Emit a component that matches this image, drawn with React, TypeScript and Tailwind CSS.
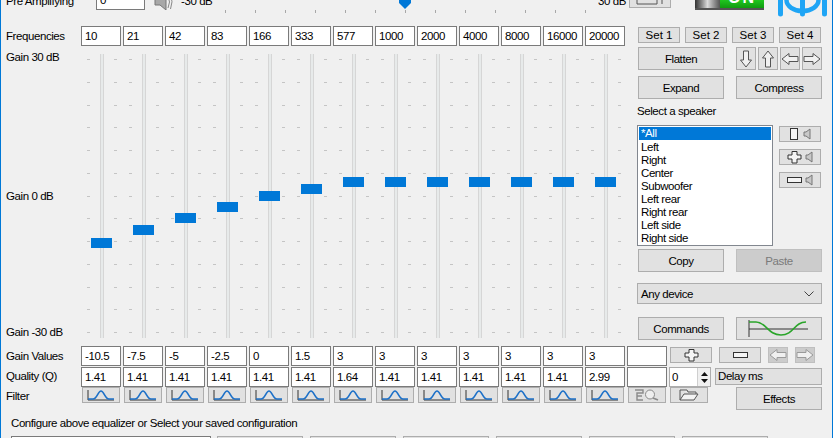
import React from "react";

const col = "border border-[#adadad] bg-[#e1e1e1] flex items-center justify-center shrink-0";
const txt = "border border-[#adadad] bg-[#e1e1e1] flex items-center justify-center shrink-0 pt-[2px]";
const freqs = ["10","21","42","83","166","333","577","1000","2000","4000","8000","16000","20000"];
const gains = ["-10.5","-7.5","-5","-2.5","0","1.5","3","3","3","3","3","3","3",""];
const qs = ["1.41","1.41","1.41","1.41","1.41","1.41","1.64","1.41","1.41","1.41","1.41","1.41","2.99",""];
const thumbs = [184,171,159,148,137,130,123,123,123,123,123,123,123];
const speakers = ["Left","Right","Center","Subwoofer","Left rear","Right rear","Left side","Right side"];
const ticks13 = Array.from({ length: 13 }, (_, i) => i);

function Field({ v }: { v: string }) {
  return <div className="w-[40px] h-[20px] shrink-0 bg-white border border-[#7a7a7a] pl-[3px] leading-[18px] overflow-hidden">{v}</div>;
}

function TickCol() {
  return (
    <div className="w-[3px] h-full py-[5px] flex flex-col justify-between">
      {ticks13.map((i) => <div key={i} className="h-px bg-[#c4c4c4]" />)}
    </div>
  );
}

function Slider({ top }: { top: number }) {
  return (
    <div className="relative w-[42px] h-[284px] shrink-0 flex">
      <div className="ml-[6px] h-full"><TickCol /></div>
      <div className="ml-[10px] w-[4px] h-full bg-[#e7eaea] border-x border-[#d6d6d6]" />
      <div className="ml-[10px] h-full"><TickCol /></div>
      <div className="absolute left-[10px] w-[21px] h-[10px] bg-[#0078d7]" style={{ top }} />
    </div>
  );
}

function Arrow({ dir, color = "#555555" }: { dir: "up" | "down" | "left" | "right"; color?: string }) {
  const rot = { up: 0, right: 90, down: 180, left: 270 }[dir];
  return (
    <svg width="18" height="18" viewBox="0 0 18 18" className="shrink-0">
      <g transform={`rotate(${rot} 9 9)`}>
        <path d="M9 1 L14.5 8 H11.5 V17 H6.5 V8 H3.5 Z" fill="#f0f0f0" stroke={color} strokeWidth="1" />
      </g>
    </svg>
  );
}

function Bell() {
  return (
    <svg width="28" height="13" viewBox="0 0 28 13">
      <path d="M1 1 V11 H27" fill="none" stroke="#333333" strokeWidth="1" />
      <path d="M1 10 H6 C10 10 11 2 14 2 C17 2 18 10 22 10 H27" fill="none" stroke="#1c70c8" strokeWidth="1.6" />
    </svg>
  );
}

function Speaker() {
  return (
    <svg width="8" height="12" viewBox="0 0 8 12">
      <path d="M1 4 H3 L7 1 V11 L3 8 H1 Z" fill="#c8c8c8" stroke="#777777" strokeWidth="1" />
    </svg>
  );
}

function Plus({ c = "#333333" }: { c?: string }) {
  return (
    <svg width="15" height="13" viewBox="0 0 15 13">
      <path d="M5 .5 H10 V4 H14 V8 H10 V12 H5 V8 H1 V4 H5 Z" fill="#f4f4f4" stroke={c} />
    </svg>
  );
}

function Minus() {
  return (
    <svg width="15" height="6" viewBox="0 0 15 6">
      <rect x=".5" y=".5" width="14" height="5" fill="#f4f4f4" stroke="#333333" />
    </svg>
  );
}

export default function App() {
  return (
    <div className="w-[833px] h-[438px] overflow-hidden bg-[#f0f0f0] border-x border-[#0078d7] text-black text-[11.5px] tracking-[-0.42px] font-['Liberation_Sans',sans-serif] flex flex-col">
      {/* clipped top row */}
      <div className="flex items-start h-[36px] -mt-[10px] shrink-0">
        <div className="ml-[5px] w-[90px] mt-[4px] leading-[14px]">Pre Amplifying</div>
        <div className="w-[49px] h-[20px] bg-white border border-[#7a7a7a] pl-[3px] leading-[18px]">0</div>
        <svg width="19" height="20" viewBox="0 0 19 20" className="ml-[9px] shrink-0">
          <path d="M1 4 H6 L12 -1 V20 L6 15 H1 Z" fill="#a8a8a8" stroke="#777777" />
          <path d="M14 6 Q17 12 14 18 M16.5 4 Q19.5 12 16.5 19" fill="none" stroke="#888888" />
        </svg>
        <div className="ml-[8px] w-[44px] mt-[4px] leading-[14px]">-30 dB</div>
        <div className="relative w-[361px] h-[4px] mt-[20px] flex justify-between shrink-0">
          {ticks13.map((i) => <div key={i} className="w-px h-[3px] bg-[#a8a8a8]" />)}
          <svg width="12" height="19" viewBox="0 0 12 19" className="absolute left-[174px] -top-[20px]">
            <path d="M0 0 H12 V13 L6 19 L0 13 Z" fill="#0078d7" />
          </svg>
        </div>
        <div className="ml-[12px] w-[31px] mt-[4px] leading-[14px]">30 dB</div>
        <div className={`${col} w-[42px] h-[18px] ml-0`}>
          <svg width="30" height="14" viewBox="0 0 30 14">
            <path d="M2 1 H22 V12 H2 Z M22 6 L27 3 V12" fill="none" stroke="#555555" />
          </svg>
        </div>
        <div className="ml-[24px] w-[69px] h-[20px] flex overflow-hidden border-b-2 border-[#555555] shrink-0">
          <div className="w-[25px] bg-gradient-to-r from-[#333333] via-[#dcdcdc] to-[#555555]" />
          <div className="flex-1 bg-gradient-to-b from-[#0a7a0a] via-[#22cc22] to-[#109a10] text-white font-bold text-[16px] leading-[15px] text-center tracking-[2px]">ON</div>
        </div>
        <svg width="49" height="28" viewBox="0 0 49 28" className="ml-[14px] shrink-0">
          <g fill="none" stroke="#1fa5f5" strokeLinecap="round">
            <path d="M2.5 2 V24 M46.5 2 V24 M24.5 2 V24" strokeWidth="5" />
            <ellipse cx="24.5" cy="10" rx="16" ry="11" strokeWidth="4.5" />
          </g>
        </svg>
      </div>

      {/* equalizer + right panel */}
      <div className="flex h-[314px] shrink-0">
        <div className="w-[636px] shrink-0 flex flex-col">
          <div className="flex items-center pl-[5px] h-[20px]">
            <div className="w-[75px] pt-[2px]">Frequencies</div>
            <div className="flex gap-[2px]">{freqs.map((f) => <Field key={f} v={f} />)}</div>
          </div>
          <div className="flex pl-[5px] mt-[8px]">
            <div className="w-[75px] -mt-[4px] flex flex-col leading-[14px]">
              <div>Gain 30 dB</div>
              <div className="mt-[125px]">Gain 0 dB</div>
              <div className="mt-[122px]">Gain -30 dB</div>
            </div>
            {thumbs.map((t, i) => <Slider key={i} top={t} />)}
          </div>
        </div>

        <div className="flex flex-col pt-[1px]">
          <div className="flex gap-[5px] ml-px">
            {["Set 1","Set 2","Set 3","Set 4"].map((s) => <div key={s} className={`${txt} w-[42px] h-[16px] tracking-normal`}>{s}</div>)}
          </div>
          <div className="flex mt-[4px] ml-px">
            <div className={`${txt} w-[86px] h-[23px]`}>Flatten</div>
            <div className="flex gap-[2px] ml-[12px]">
              <div className={`${col} w-[20px] h-[23px]`}><Arrow dir="down" /></div>
              <div className={`${col} w-[20px] h-[23px]`}><Arrow dir="up" /></div>
              <div className={`${col} w-[20px] h-[23px]`}><Arrow dir="left" /></div>
              <div className={`${col} w-[20px] h-[23px]`}><Arrow dir="right" /></div>
            </div>
          </div>
          <div className="flex mt-[6px] ml-px gap-[12px]">
            <div className={`${txt} w-[86px] h-[23px]`}>Expand</div>
            <div className={`${txt} w-[86px] h-[23px]`}>Compress</div>
          </div>
          <div className="mt-[5px] leading-[14px]">Select a speaker</div>
          <div className="flex mt-[7px]">
            <div className="w-[136px] h-[121px] bg-white border border-[#82878f] p-px leading-[15px] shrink-0">
              <div className="h-[13px] bg-[#0078d7] text-white pl-[2px] leading-[13px]">*All</div>
              {speakers.map((s) => <div key={s} className="h-[13px] pl-[2px]">{s}</div>)}
            </div>
            <div className="flex flex-col gap-[7px] ml-[6px] mt-px">
              <div className={`${col} w-[42px] h-[16px] gap-[5px]`}>
                <div className="w-[8px] h-[12px] border border-[#333333] bg-[#f4f4f4]" /><Speaker />
              </div>
              <div className={`${col} w-[42px] h-[16px] gap-[3px]`}><Plus /><Speaker /></div>
              <div className={`${col} w-[42px] h-[16px] gap-[3px]`}><Minus /><Speaker /></div>
            </div>
          </div>
          <div className="flex mt-[3px] ml-px gap-[12px]">
            <div className={`${txt} w-[86px] h-[23px]`}>Copy</div>
            <div className="w-[86px] h-[23px] pt-[2px] border border-[#bfbfbf] bg-[#cccccc] text-[#7a7a7a] flex items-center justify-center">Paste</div>
          </div>
          <div className={`${col} !justify-between w-[185px] h-[21px] mt-[11px] pl-[3px] pr-[7px]`}>
            <span className="pt-[2px]">Any device</span>
            <svg width="10" height="6" viewBox="0 0 10 6"><path d="M.5 .5 L5 5 L9.5 .5" fill="none" stroke="#444444" /></svg>
          </div>
          <div className="flex mt-[13px] ml-px gap-[12px]">
            <div className={`${txt} w-[86px] h-[23px]`}>Commands</div>
            <div className={`${col} w-[86px] h-[23px]`}>
              <svg width="62" height="18" viewBox="0 0 62 18">
                <path d="M1 0 V17 M1 9 H60" fill="none" stroke="#333333" />
                <path d="M1 2 H8 C18 2 20 15 33 15 C46 15 46 2 58 2" fill="none" stroke="#2aa52a" strokeWidth="1.6" />
              </svg>
            </div>
          </div>
        </div>
      </div>

      {/* lower rows */}
      <div className="flex mt-[6px] pl-[5px] h-[21px] shrink-0">
        <div className="w-[75px] h-[20px] pt-[2px] flex items-center">Gain Values</div>
        <div className="flex gap-[2px]">{gains.map((g, i) => <Field key={i} v={g} />)}</div>
        <div className={`${col} w-[42px] h-[16px] mt-px ml-[3px]`}><Plus /></div>
        <div className={`${col} w-[42px] h-[16px] mt-px ml-[7px]`}><Minus /></div>
        <div className="w-[20px] h-[16px] mt-px ml-[7px] bg-[#cccccc] border border-[#bfbfbf] flex items-center justify-center"><Arrow dir="left" color="#9a9a9a" /></div>
        <div className="w-[20px] h-[16px] mt-px ml-[7px] bg-[#cccccc] border border-[#bfbfbf] flex items-center justify-center"><Arrow dir="right" color="#9a9a9a" /></div>
      </div>
      <div className="flex pl-[5px] h-[20px] shrink-0">
        <div className="w-[75px] h-[20px] flex items-center">Quality (Q)</div>
        <div className="flex gap-[2px]">{qs.map((q, i) => <Field key={i} v={q} />)}</div>
        <div className="flex ml-[2px] w-[42px] h-[20px] border border-[#adadad] bg-white">
          <div className="w-[27px] pl-[2px] leading-[18px]">0</div>
          <div className="flex-1 flex flex-col bg-[#f0f0f0] border-l border-[#cfcfcf] items-center justify-center gap-[3px]">
            <svg width="7" height="4" viewBox="0 0 7 4"><path d="M3.5 0 L7 4 H0 Z" fill="#111111" /></svg>
            <svg width="7" height="4" viewBox="0 0 7 4"><path d="M3.5 4 L7 0 H0 Z" fill="#111111" /></svg>
          </div>
        </div>
        <div className={`${col} !justify-start pl-[2px] w-[107px] h-[17px] mt-px ml-[4px]`}>Delay ms</div>
      </div>
      <div className="flex items-start pl-[5px] h-[23px] shrink-0">
        <div className="w-[76px] h-[18px] pt-[2px] flex items-center">Filter</div>
        <div className="flex gap-[4px]">
          {ticks13.map((i) => <div key={i} className={`${col} w-[38px] h-[16px]`}><Bell /></div>)}
          <div className={`${col} w-[38px] h-[16px]`}>
            <svg width="26" height="12" viewBox="0 0 26 12">
              <path d="M1 1 H9 V4 H3 V7 H8 M3 7 V11 H9" fill="none" stroke="#8a8a8a" strokeWidth="1.4" />
              <circle cx="16" cy="5.5" r="4.5" fill="#eeeeee" stroke="#8a8a8a" />
              <path d="M19 9 L24 11" stroke="#8a8a8a" strokeWidth="1.6" />
            </svg>
          </div>
          <div className={`${col} w-[38px] h-[16px]`}>
            <svg width="20" height="12" viewBox="0 0 20 12">
              <path d="M1 1 H8 L9 3 H17 V5 M1 1 V11 H15 L19 5 H5 L1 11" fill="#f4f4f4" stroke="#555555" />
            </svg>
          </div>
        </div>
        <div className={`${txt} w-[86px] h-[23px] ml-[28px]`}>Effects</div>
      </div>
      <div className="mt-[6px] pl-[10px] leading-[14px] shrink-0">Configure above equalizer or Select your saved configuration</div>
      <div className="flex mt-[6px] pl-[10px] shrink-0">
        <div className="w-[200px] h-[22px] bg-white border border-[#7a7a7a] shrink-0" />
        <div className={`${col} w-[86px] h-[22px] ml-[6px]`} />
        <div className={`${col} w-[86px] h-[22px] ml-[7px]`} />
        <div className={`${col} w-[86px] h-[22px] ml-[7px]`} />
        <div className={`${col} w-[86px] h-[22px] ml-[7px]`} />
        <div className={`${col} w-[86px] h-[22px] ml-[7px]`} />
        <div className={`${col} w-[86px] h-[22px] ml-[7px]`} />
      </div>
    </div>
  );
}
